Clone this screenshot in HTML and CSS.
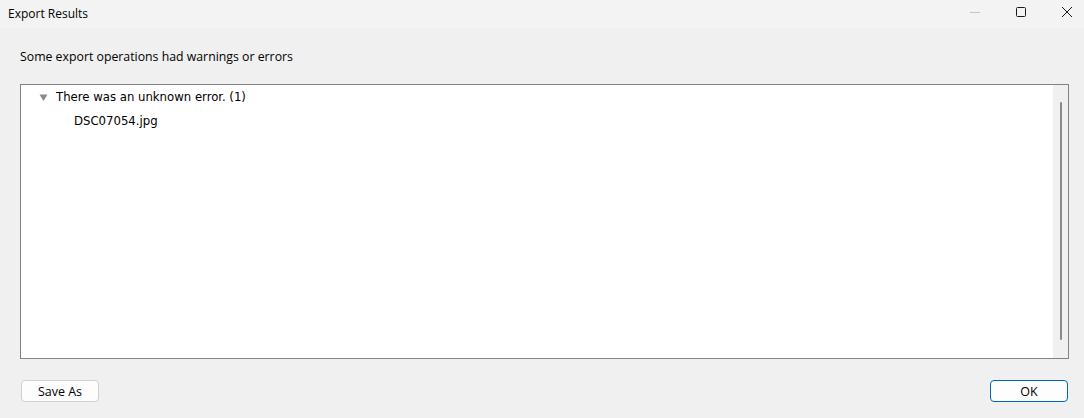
FILE: index.html
```html
<!DOCTYPE html>
<html lang="en">

<head>
    <meta charset="UTF-8">
    <title>Export Results</title>
    <link rel="stylesheet" href="styles.css">
</head>

<body>
    <div class="window">
        <div class="titlebar">
            <span class="titlebar__title">Export Results</span>
            <div class="titlebar__controls">
                <span class="titlebar__button">
                    <svg width="12" height="12" viewBox="0 0 12 12"><path d="M1 6.5h10" stroke="#c4c4c4" stroke-width="1" /></svg>
                </span>
                <span class="titlebar__button">
                    <svg width="12" height="12" viewBox="0 0 12 12"><rect x="1.5" y="1.5" width="9" height="9" rx="1" fill="none" stroke="#1a1a1a" stroke-width="1" /></svg>
                </span>
                <span class="titlebar__button">
                    <svg width="12" height="12" viewBox="0 0 12 12"><path d="M1 1l10 10M11 1L1 11" stroke="#1a1a1a" stroke-width="1" /></svg>
                </span>
            </div>
        </div>

        <div class="content">
            <p class="message">Some export operations had warnings or errors</p>

            <div class="tree">
                <ul class="tree__list">
                    <li class="tree__group">
                        <div class="tree__row">
                            <svg class="tree__arrow" width="9" height="9" viewBox="0 0 9 9"><path d="M0.5 1.5h8L4.5 8z" fill="#8a8a8a" /></svg>
                            There was an unknown error. (1)
                        </div>
                        <ul class="tree__children">
                            <li class="tree__row tree__row--child">DSC07054.jpg</li>
                        </ul>
                    </li>
                </ul>
                <div class="tree__scrollbar">
                    <div class="tree__thumb"></div>
                </div>
            </div>

            <div class="actions">
                <button class="button">Save As</button>
                <button class="button button--default">OK</button>
            </div>
        </div>
    </div>
</body>

</html>
```

FILE: styles.css
```css
:root {
    --title-bg: #f3f3f3;
    --window-bg: #f0f0f0;
    --text-color: #000;
    --border-color: #828282;
    --accent-color: #0067c0;
}

html,
body {
    margin: 0;
    padding: 0;
    height: 100%;
}

body {
    font-family: "Open Sans", "Noto Sans", sans-serif;
    color: var(--text-color);
    background-color: var(--window-bg);
    overflow: hidden;
}

.window {
    width: 1084px;
    height: 418px;
    display: flex;
    flex-direction: column;
    overflow: hidden;
}

.titlebar {
    height: 28px;
    background-color: var(--title-bg);
    display: flex;
    align-items: center;
    justify-content: space-between;
    flex-shrink: 0;
}

.titlebar__title {
    padding-left: 8px;
    font-size: 12px;
    padding-bottom: 2px;
}

.titlebar__controls {
    display: flex;
    align-self: stretch;
    margin-right: -6px;
}

.titlebar__button {
    width: 46px;
    display: flex;
    align-items: center;
    justify-content: center;
    padding-bottom: 4px;
}

.content {
    flex-grow: 1;
    padding: 0 15px 0 20px;
    display: flex;
    flex-direction: column;
}

.message {
    margin: 20px 0 0;
    font-size: 12.3px;
    line-height: 17px;
}

.tree {
    margin-top: 19px;
    height: 275px;
    box-sizing: border-box;
    border: 1px solid var(--border-color);
    background-color: #fff;
    display: flex;
}

.tree__list,
.tree__children {
    list-style: none;
    margin: 0;
    padding: 0;
}

.tree__list {
    flex-grow: 1;
}

.tree__row {
    font-family: "DejaVu Sans Condensed", "DejaVu Sans", sans-serif;
    font-size: 13px;
    line-height: 24px;
    display: flex;
    align-items: center;
    padding-left: 18px;
}

.tree__row--child {
    padding-left: 53px;
}

.tree__arrow {
    margin-right: 8px;
}

.tree__scrollbar {
    width: 15px;
    background-color: var(--window-bg);
    display: flex;
    justify-content: center;
    padding-top: 17px;
    padding-bottom: 18px;
}

.tree__thumb {
    width: 2px;
    background-color: #8a8a8a;
    border-radius: 1px;
}

.actions {
    display: flex;
    justify-content: space-between;
    margin-top: 21px;
}

.button {
    width: 78px;
    height: 22px;
    font-family: "Open Sans", "Noto Sans", sans-serif;
    font-size: 12.5px;
    background-color: #fdfdfd;
    border: 1px solid #d0d0d0;
    border-radius: 4px;
    padding: 0;
    margin-left: 1px;
    color: var(--text-color);
}

.button--default {
    border-color: var(--accent-color);
    margin-left: 0;
    margin-right: 1px;
}
```
